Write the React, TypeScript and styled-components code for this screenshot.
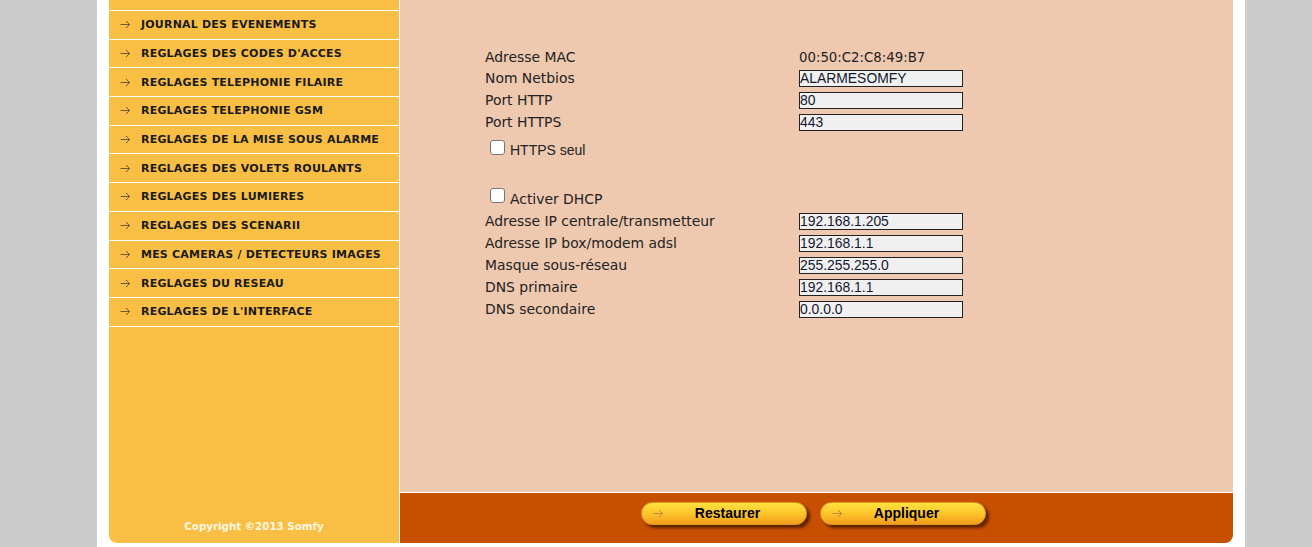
import styled, { createGlobalStyle } from "styled-components";

const GlobalStyle = createGlobalStyle`
  html, body {
    margin: 0;
    padding: 0;
    background: #cccccc;
  }
  body {
    font-family: "DejaVu Sans", Verdana, sans-serif;
  }
`;

const Page = styled.div`
  width: 1148px;
  height: 547px;
  margin-left: 97px;
  box-sizing: border-box;
  padding: 0 12px 4px;
  background: #ffffff;
  display: flex;
  overflow: hidden;
`;

const Sidebar = styled.nav`
  width: 290px;
  flex-shrink: 0;
  background: #f9bf44;
  border-right: 1px solid #ffffff;
  border-bottom-left-radius: 8px;
  display: flex;
  flex-direction: column;
  overflow: hidden;
`;

const Menu = styled.ul`
  list-style: none;
  margin: -17.7px 0 0;
  padding: 0;
`;

const MenuItem = styled.li`
  height: 28.7px;
  box-sizing: border-box;
  border-bottom: 1px solid #ffffff;
  display: flex;
  align-items: center;
  gap: 10px;
  padding-left: 11px;
  font-size: 11px;
  font-weight: bold;
  letter-spacing: 0.2px;
  color: #1a1a1a;
  white-space: nowrap;
`;

const Copyright = styled.div`
  margin-top: auto;
  padding-bottom: 11px;
  text-align: center;
  font-size: 10.3px;
  font-weight: bold;
  color: #fff6e2;
`;

const Main = styled.div`
  flex: 1;
  display: flex;
  flex-direction: column;
`;

const Content = styled.section`
  flex: 1;
  background: #eec9b0;
  border-bottom: 1px solid #ffffff;
  padding: 45px 0 0 85px;
`;

const Row = styled.div<{ $h?: number }>`
  display: flex;
  align-items: center;
  box-sizing: border-box;
  height: ${(p) => p.$h ?? 22}px;
`;

const HeadRow = styled(Row)`
  padding-top: 2px;
`;

const CheckRow = styled.div<{ $h: number; $top: number }>`
  display: flex;
  align-items: flex-start;
  box-sizing: border-box;
  height: ${(p) => p.$h}px;
  padding: ${(p) => p.$top}px 0 0 5px;
`;

const Label = styled.div`
  width: 314px;
  font-size: 13.9px;
  color: #222222;
`;

const Value = styled.div`
  font-size: 13.3px;
  color: #222222;
  padding-top: 1px;
`;

const TextInput = styled.input`
  width: 164px;
  height: 17px;
  box-sizing: border-box;
  margin: 0;
  padding: 0;
  border: 1px solid #222222;
  background: #f0f0f0;
  font-family: "Liberation Sans", Arial, sans-serif;
  font-size: 13.9px;
  color: #141830;
  outline: none;
`;

const CheckLabel = styled.label<{ $arial?: boolean }>`
  display: flex;
  align-items: flex-start;
  font-family: ${(p) =>
    p.$arial ? `"Liberation Sans", Arial, sans-serif` : `"DejaVu Sans", Verdana, sans-serif`};
  font-size: ${(p) => (p.$arial ? 14 : 13.9)}px;
  color: #222222;
  line-height: 16px;
`;

const CheckText = styled.span<{ $drop: number }>`
  padding-top: ${(p) => p.$drop}px;
`;

const Box = styled.input.attrs({ type: "checkbox" })`
  appearance: none;
  width: 15px;
  height: 15px;
  margin: 0 5px 0 0;
  box-sizing: border-box;
  border: 1px solid #767676;
  border-radius: 3px;
  background: #ffffff;
`;

const Footer = styled.footer`
  height: 50px;
  background: #c74f00;
  border-bottom-right-radius: 8px;
  display: flex;
  justify-content: center;
  align-items: flex-start;
  gap: 13px;
  padding: 9px 7px 0 0;
  box-sizing: border-box;
`;

const Button = styled.button`
  width: 166px;
  height: 23px;
  box-sizing: border-box;
  border: 1px solid #d99a2a;
  border-radius: 12px;
  background: linear-gradient(#ffe23e, #fcc22a 55%, #f49c1a);
  box-shadow: 3px 3px 3px rgba(60, 20, 0, 0.75);
  display: flex;
  align-items: center;
  padding: 0 0 1px 11px;
  font-family: "Liberation Sans", Arial, sans-serif;
  font-size: 14px;
  font-weight: bold;
  color: #000000;
  cursor: pointer;
`;

const ButtonText = styled.span`
  flex: 1;
  text-align: center;
  padding-right: 14px;
`;

const Arrow = ({ color }: { color: string }) => (
  <svg width="11" height="9" viewBox="0 0 11 9" fill="none" stroke={color} strokeWidth="1">
    <path d="M0.5 4.5 H10" />
    <path d="M6 1 L9.6 4.5 L6 8" />
  </svg>
);

const menu = [
  "JOURNAL DES EVENEMENTS",
  "REGLAGES DES CODES D'ACCES",
  "REGLAGES TELEPHONIE FILAIRE",
  "REGLAGES TELEPHONIE GSM",
  "REGLAGES DE LA MISE SOUS ALARME",
  "REGLAGES DES VOLETS ROULANTS",
  "REGLAGES DES LUMIERES",
  "REGLAGES DES SCENARII",
  "MES CAMERAS / DETECTEURS IMAGES",
  "REGLAGES DU RESEAU",
  "REGLAGES DE L'INTERFACE",
];

const topFields = [
  ["Nom Netbios", "ALARMESOMFY"],
  ["Port HTTP", "80"],
  ["Port HTTPS", "443"],
];

const ipFields = [
  ["Adresse IP centrale/transmetteur", "192.168.1.205"],
  ["Adresse IP box/modem adsl", "192.168.1.1"],
  ["Masque sous-réseau", "255.255.255.0"],
  ["DNS primaire", "192.168.1.1"],
  ["DNS secondaire", "0.0.0.0"],
];

export default function App() {
  return (
    <>
      <GlobalStyle />
      <Page>
        <Sidebar>
          <Menu>
            <MenuItem>
              <Arrow color="#6b5a3a" />
            </MenuItem>
            {menu.map((m) => (
              <MenuItem key={m}>
                <Arrow color="#6b5a3a" />
                {m}
              </MenuItem>
            ))}
          </Menu>
          <Copyright>Copyright ©2013 Somfy</Copyright>
        </Sidebar>
        <Main>
          <Content>
            <HeadRow>
              <Label>Adresse MAC</Label>
              <Value>00:50:C2:C8:49:B7</Value>
            </HeadRow>
            {topFields.map(([l, v]) => (
              <Row key={l}>
                <Label>{l}</Label>
                <TextInput defaultValue={v} />
              </Row>
            ))}
            <CheckRow $h={28} $top={7}>
              <CheckLabel $arial>
                <Box />
                <CheckText $drop={2}>HTTPS seul</CheckText>
              </CheckLabel>
            </CheckRow>
            <Row $h={20} />
            <CheckRow $h={29} $top={7}>
              <CheckLabel>
                <Box />
                <CheckText $drop={3}>Activer DHCP</CheckText>
              </CheckLabel>
            </CheckRow>
            {ipFields.map(([l, v]) => (
              <Row key={l}>
                <Label>{l}</Label>
                <TextInput defaultValue={v} />
              </Row>
            ))}
          </Content>
          <Footer>
            <Button>
              <Arrow color="#b88a3a" />
              <ButtonText>Restaurer</ButtonText>
            </Button>
            <Button>
              <Arrow color="#b88a3a" />
              <ButtonText>Appliquer</ButtonText>
            </Button>
          </Footer>
        </Main>
      </Page>
    </>
  );
}
